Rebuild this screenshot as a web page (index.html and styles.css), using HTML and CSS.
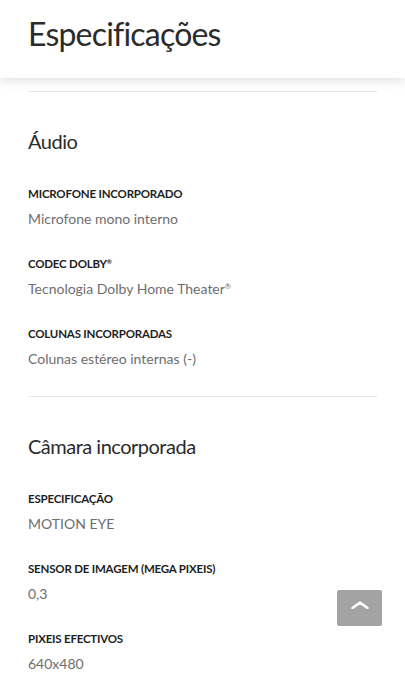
FILE: index.html
```html
<!DOCTYPE html>
<html lang="pt">
<head>
  <meta charset="UTF-8" />
  <meta name="viewport" content="width=device-width, initial-scale=1.0"/>
  <title>Especificações</title>
  <link rel="stylesheet" href="styles.css">
</head>
<body>
  <header class="page-header">
    <h1>Especificações</h1>
  </header>

  <main class="specs">
    <section class="spec-group">
      <h2>Áudio</h2>
      <dl>
        <dt>Microfone incorporado</dt>
        <dd>Microfone mono interno</dd>
        <dt>Codec Dolby<sup>®</sup></dt>
        <dd>Tecnologia Dolby Home Theater<sup>®</sup></dd>
        <dt>Colunas incorporadas</dt>
        <dd>Colunas estéreo internas (-)</dd>
      </dl>
    </section>

    <section class="spec-group">
      <h2>Câmara incorporada</h2>
      <dl>
        <dt>Especificação</dt>
        <dd>MOTION EYE</dd>
        <dt>Sensor de imagem (mega pixeis)</dt>
        <dd>0,3</dd>
        <dt>Pixeis efectivos</dt>
        <dd>640x480</dd>
      </dl>
    </section>
  </main>

  <button class="back-to-top" aria-label="Voltar ao topo">
    <svg width="18" height="8" viewBox="0 0 18 8">
      <polyline points="1.5,7 9,1.5 16.5,7" fill="none" stroke="#fff" stroke-width="2.4" stroke-linecap="round" stroke-linejoin="round"/>
    </svg>
  </button>
</body>
</html>
```

FILE: styles.css
```css
body {
  margin: 0;
  font-family: 'Lato', 'Open Sans', sans-serif;
  background: #ffffff;
  color: #333333;
}

.page-header {
  position: sticky;
  top: 0;
  z-index: 2;
  height: 78px;
  box-sizing: border-box;
  padding: 14px 28px 0;
  background: #ffffff;
  box-shadow: 0 3px 10px rgba(0,0,0,0.12);
}

.page-header h1 {
  margin: 0;
  font-size: 32px;
  font-weight: 400;
  line-height: 40px;
  letter-spacing: -0.8px;
  color: #2b2b2b;
}

.specs {
  padding: 13px 28px 40px;
}

.spec-group {
  border-top: 1px solid #e6e6e6;
  padding: 35px 0 26px;
}

.spec-group h2 {
  margin: 0 0 30px;
  font-size: 20px;
  font-weight: 400;
  line-height: 28px;
  letter-spacing: -0.5px;
  color: #2b2b2b;
}

dl {
  margin: 0;
}

dt {
  font-size: 11.5px;
  font-weight: 700;
  line-height: 18px;
  letter-spacing: -0.2px;
  text-transform: uppercase;
  color: #1e1e1e;
  margin-top: 25px;
}

dt:first-child {
  margin-top: 0;
}

dd {
  margin: 5px 0 0;
  font-size: 14px;
  line-height: 22px;
  color: #6e6e6e;
}

sup {
  font-size: 0.55em;
  vertical-align: 0.6em;
  line-height: 0;
}

.back-to-top {
  position: fixed;
  right: 23px;
  bottom: 74px;
  width: 45px;
  height: 36px;
  padding: 0 0 6px;
  border: none;
  border-radius: 2px;
  background: #a3a3a3;
  display: flex;
  align-items: center;
  justify-content: center;
  cursor: pointer;
}
```
